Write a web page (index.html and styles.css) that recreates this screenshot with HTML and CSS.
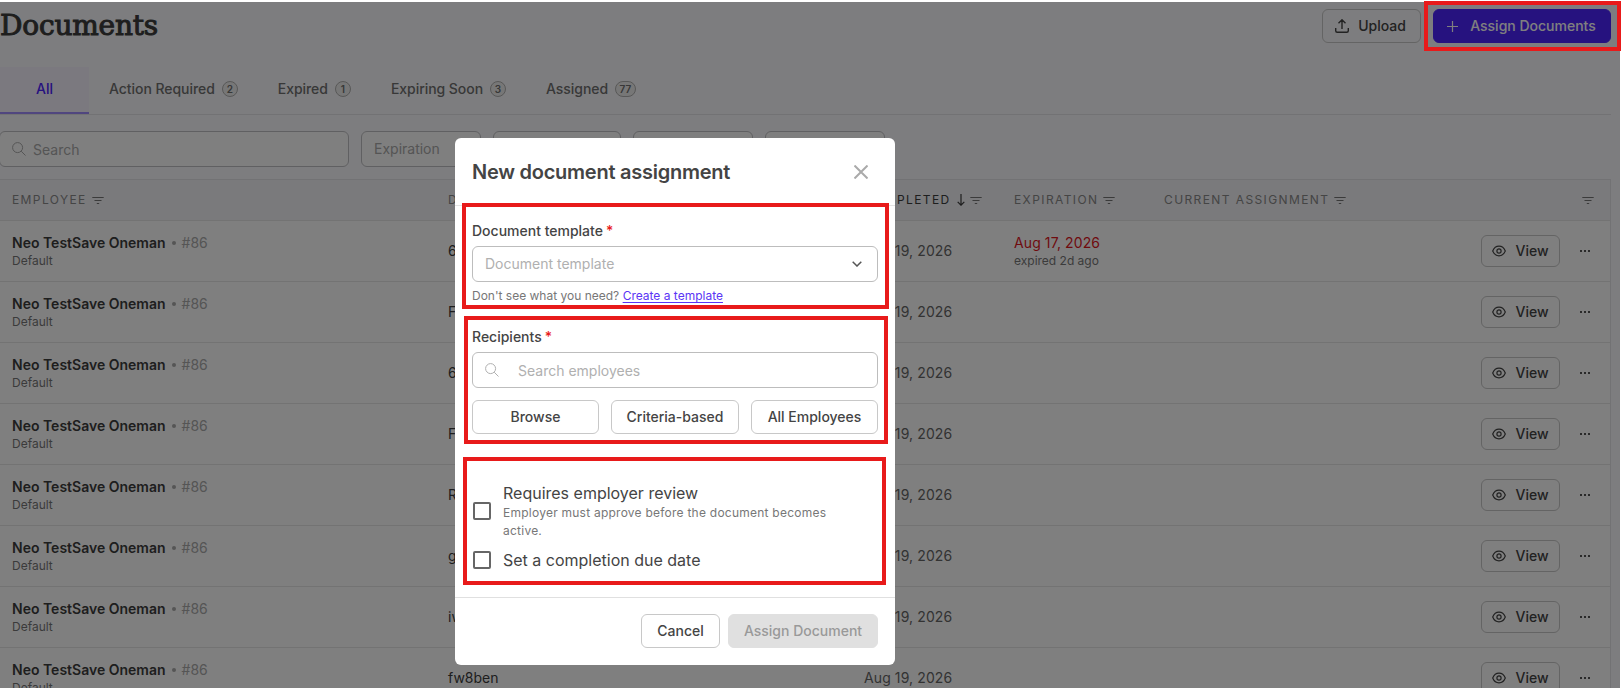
FILE: index.html
```
<!DOCTYPE html>
<html lang="en">
<head>
<meta charset="utf-8">
<title>Documents</title>
<link rel="stylesheet" href="styles.css">
</head>
<body>
<svg class="defs" width="0" height="0">
  <symbol id="filter" viewBox="0 0 12 9"><path d="M.3 1.5h11.4M2.5 4.5h7M4.8 7.5h2.4" fill="none" stroke="currentColor" stroke-width="1"/></symbol>
  <symbol id="search" viewBox="0 0 14 14"><circle cx="5.6" cy="5.6" r="5" fill="none" stroke="currentColor"/><path d="M9.2 9.2l4.3 4.3" fill="none" stroke="currentColor"/></symbol>
  <symbol id="eye" viewBox="0 0 14 12"><path d="M.7 6C2 2.800 4.300 1.200 7 1.200S12 2.800 13.300 6C12 9.200 9.700 10.800 7 10.800S2 9.200.7 6z" fill="none" stroke="currentColor" stroke-width="1.200"/><circle cx="7" cy="6" r="2.100" fill="none" stroke="currentColor" stroke-width="1.200"/></symbol>
  <symbol id="dots" viewBox="0 0 10 2"><path d="M0 0h2v2H0zM4 0h2v2H4zM8 0h2v2H8z" fill="currentColor"/></symbol>
</svg>
<main class="page">
  <header class="topbar">
    <h1 class="title">Documents</h1>
    <button class="btn upload"><svg width="14" height="14" viewBox="0 0 14 14"><path d="M7 10V1M3.500 4.300L7 .8l3.500 3.500M.7 9v2.800q0 1.500 1.500 1.500h9.600q1.500 0 1.500-1.500V9" fill="none" stroke="currentColor" stroke-width="1.400"/></svg>Upload</button>
    <button class="btn primary"><svg width="11" height="11" viewBox="0 0 11 11"><path d="M5.500 0v11M0 5.500h11" stroke="currentColor" stroke-width="1.200"/></svg>Assign Documents</button>
  </header>
  <nav class="tabs">
    <a class="tab active">All</a>
    <a class="tab">Action Required<span class="badge">2</span></a>
    <a class="tab">Expired<span class="badge">1</span></a>
    <a class="tab">Expiring Soon<span class="badge">3</span></a>
    <a class="tab">Assigned<span class="badge">77</span></a>
  </nav>
  <div class="filters">
    <div class="field searchbox"><svg width="14" height="14"><use href="#search"/></svg><span>Search</span></div>
    <div class="field f1">Expiration</div><div class="field f2"></div><div class="field f3"></div><div class="field f3"></div>
  </div>
  <section class="table">
    <div class="row head">
      <div>EMPLOYEE<svg class="fi"><use href="#filter"/></svg></div>
      <div>DOCUMENT</div>
      <div class="sorted">COMPLETED<svg class="arrow" width="8" height="12" viewBox="0 0 8 12"><path d="M4 0v11M.7 7.800L4 11.200l3.300-3.400" fill="none" stroke="currentColor" stroke-width="1.200"/></svg><svg class="fi"><use href="#filter"/></svg></div>
      <div>EXPIRATION<svg class="fi"><use href="#filter"/></svg></div>
      <div>CURRENT ASSIGNMENT<svg class="fi"><use href="#filter"/></svg></div>
      <div class="last"><svg class="fi"><use href="#filter"/></svg></div>
    </div>
    <div id="rows"></div>
  </section>
</main>
<div class="overlay"></div>
<div class="dialog">
  <header class="dhead"><h2>New document assignment</h2><svg width="14" height="14" viewBox="0 0 14 14"><path d="M.5.5l13 13M13.500.5l-13 13" stroke="#aaa" stroke-width="2" fill="none"/></svg></header>
  <div class="dbody">
    <label class="label">Document template<b>*</b></label>
    <div class="input select">Document template<svg width="10" height="6" viewBox="0 0 10 6"><path d="M.7.7L5 5 9.300.7" fill="none" stroke="#555" stroke-width="1.500"/></svg></div>
    <p class="hint">Don't see what you need? <a>Create a template</a></p>
    <label class="label second">Recipients<b>*</b></label>
    <div class="input lookup"><svg width="14" height="14"><use href="#search"/></svg><span>Search employees</span></div>
    <div class="choices"><button class="btn">Browse</button><button class="btn">Criteria-based</button><button class="btn">All Employees</button></div>
    <div class="option review"><i class="box"></i><div><div class="otext">Requires employer review</div><p class="odesc">Employer must approve before the document becomes active.</p></div></div>
    <div class="option due"><i class="box"></i><div class="otext">Set a completion due date</div></div>
  </div>
  <footer class="dfoot"><button class="btn cancel">Cancel</button><button class="btn disabled">Assign Document</button></footer>
</div>
<div class="mark m0"></div><div class="mark m1"></div><div class="mark m2"></div><div class="mark m3"></div>
<script src="rows.js"></script>
</body>
</html>
```
FILE: rows.js
```
const documents = ["6", "F", "6", "F", "R", "g", "iw", "fw8ben"];
document.getElementById("rows").innerHTML = documents.map((name, i) => `
  <div class="row">
    <div class="person"><div><strong>Neo TestSave Oneman</strong><i class="bullet"></i><span class="num">#86</span></div><small>Default</small></div>
    <div class="doc">${name}</div>
    <div class="date">Aug 19, 2026</div>
    <div class="exp">${i === 0 ? '<div class="late">Aug 17, 2026</div><small>expired 2d ago</small>' : ""}</div>
    <div></div>
    <div class="actions"><button class="btn view"><svg width="14" height="12"><use href="#eye"/></svg>View</button><svg class="dots" width="10" height="2"><use href="#dots"/></svg></div>
  </div>`).join("");
```
FILE: styles.css
```
* { box-sizing: border-box; }
html, body { margin: 0; height: 688px; overflow: hidden; }
body { font: 14px/20px Inter, sans-serif; color: #444; background: #fff; position: relative; }
h1, h2, p { margin: 0; font-weight: 600; }
svg { flex: none; display: block; }
.defs { position: absolute; }
.page { margin-top: 2px; width: 1620px; height: 686px; overflow: hidden; background: #fbfbfe; padding-right: 9px; }
.topbar { height: 65px; padding-top: 7px; display: flex; align-items: flex-start; }
.title { flex: 1; font: 400 28px/34px "DejaVu Serif", serif; color: #3d3d3d; letter-spacing: -.2px; -webkit-text-stroke: 1px #3d3d3d; }
.btn { font: 450 14px/20px Inter, sans-serif; color: #444; border: 1px solid #c8c8c8; border-radius: 6px; background: #fff; height: 34px; padding: 0; display: flex; align-items: center; justify-content: center; white-space: nowrap; }
.upload { width: 99px; gap: 9px; background: transparent; margin-right: 12px; padding-right: 2px; }
.primary { width: 178px; gap: 12px; background: #4d25ff; border-color: #4d25ff; color: #fff; font-weight: 550; padding-right: 1px; }
.tabs { display: flex; height: 48px; border-bottom: 1px solid #e4e4e8; }
.tab { display: flex; align-items: center; gap: 7px; margin-right: 40px; font-weight: 450; letter-spacing: -.05px; color: #707070; padding-bottom: 3px; }
.active { width: 89px; justify-content: center; margin-right: 20px; padding-top: 1px; padding-bottom: 2px; background: #f6f3ff; border-bottom: 2px solid #a08cff; color: #4d25ff; }
.badge { height: 16px; min-width: 16px; border: 1px solid #b0b0b0; border-radius: 8px; background: #eee; font-size: 10px; line-height: 14px; text-align: center; font-weight: 600; padding: 0 3.500px; }
.filters { display: flex; gap: 12px; padding-top: 16px; height: 64px; margin-left: -1px; }
.field { height: 36px; border: 1px solid #c0c0c4; border-radius: 6px; background: #fff; color: #aaa; display: flex; align-items: center; padding: 0 12px; }
.searchbox { width: 350px; gap: 7px; }
.searchbox span { padding-top: 2px; }
.f1 { width: 120px; } .f2 { width: 128px; } .f3 { width: 120px; }
.table { border-top: 1px solid #e4e4e8; border-right: 1px solid #e4e4e8; background: #fff; }
.row { display: grid; grid-template-columns: 448px 416px 150px 150px 1fr 150px; height: 61px; border-bottom: 1px solid #e6e6e6; align-items: center; }
.head { height: 41px; background: #f4f4f8; font-size: 12px; letter-spacing: 1.400px; color: #8a8a8a; }
.head > div { display: flex; align-items: center; }
.head > div:first-child, .person { padding-left: 12px; }
.fi { width: 12px; height: 9px; margin-left: 5px; color: #777; }
.sorted { color: #3d3d3d; }
.arrow { margin-left: 6px; }
.last { justify-content: flex-end; padding-right: 16px; }
strong { font-weight: 600; color: #3d3d3d; }
.person > div { display: flex; align-items: center; height: 20px; }
.bullet { width: 4px; height: 4px; border-radius: 2px; background: #aaa; margin: 0 6px 0 6px; }
.num { color: #aaa; }
small { display: block; font-size: 12px; line-height: 16px; color: #777; }
.doc { color: #3d3d3d; } .date { color: #666; letter-spacing: .1px; }
.late { color: #e0161d; letter-spacing: .1px; }
.actions { display: flex; align-items: center; justify-content: flex-end; gap: 20px; padding-right: 20px; }
.view { width: 79px; height: 32px; gap: 9px; }
.dots { color: #555; }
.overlay { position: absolute; top: 2px; left: 0; width: 1620px; height: 686px; background: rgba(0,0,0,.5); }
.dialog { position: absolute; left: 455px; top: 138px; width: 440px; height: 527px; border-radius: 6px; background: #fff; display: flex; flex-direction: column; }
.dhead { height: 68px; border-bottom: 1px solid #e4e4e4; display: flex; align-items: center; justify-content: space-between; padding: 0 27px 0 17px; }
.dhead h2 { font-size: 20px; line-height: 28px; font-weight: 600; letter-spacing: -.25px; color: #444; }
.dbody { flex: 1; padding: 15px 17px 0; }
.label { display: block; height: 25px; line-height: 20px; font-weight: 450; }
.label b { color: #e81a1a; font-weight: 500; margin-left: 3px; }
.input { height: 36px; border: 1px solid #bdbdbd; border-radius: 6px; display: flex; align-items: center; padding: 0 12px; color: #b0b0b0; }
.select { justify-content: space-between; padding-right: 15px; }
.hint { font-size: 12px; font-weight: 400; line-height: 16px; color: #777; margin-top: 6px; }
.hint a { color: #5b35f5; text-decoration: underline; text-underline-offset: 2px; }
.second { margin-top: 23px; }
.lookup { gap: 19px; }
.lookup span { padding-top: 2px; }
.choices { display: grid; grid-template-columns: 127px 128px 127px; gap: 12px; margin-top: 12px; }
.option { display: flex; align-items: center; gap: 12px; padding-left: 1px; }
.box { width: 18px; height: 18px; border: 2px solid #666; border-radius: 2px; flex: none; }
.otext { font-size: 16px; line-height: 20px; color: #444; }
.odesc { font-size: 12px; line-height: 18px; font-weight: 400; letter-spacing: .24px; color: #777; width: 340px; padding-top: 1px; margin-bottom: -1px; }
.review { margin-top: 49px; }
.due { margin-top: 11px; }
.dfoot { height: 68px; border-top: 1px solid #e0e0e0; display: flex; justify-content: flex-end; gap: 8px; padding: 16px 17px 0; }
.cancel { width: 79px; }
.disabled { width: 150px; background: #e0e0e0; border-color: #e0e0e0; color: #999; }
.mark { position: absolute; border: 4px solid #e81a1a; }
.m0 { left: 1424px; top: 1px; width: 197px; height: 50px; }
.m1 { left: 462px; top: 203px; width: 427px; height: 106px; }
.m2 { left: 464px; top: 316px; width: 424px; height: 128px; }
.m3 { left: 463px; top: 457px; width: 423px; height: 128px; }
```
